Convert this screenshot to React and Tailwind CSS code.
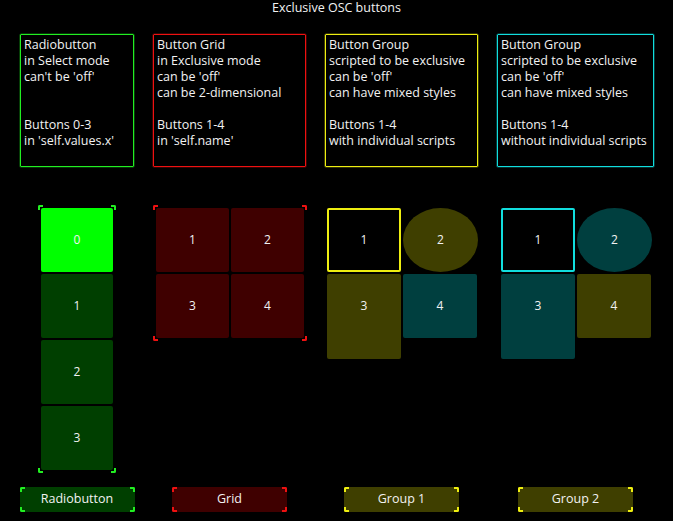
const font = { fontFamily: '"Open Sans", "DejaVu Sans", sans-serif' }

const infos = [
  {
    border: 'border-[#22ee22] shadow-[0_0_0_0.6px_#0d660d]',
    w: 'w-[114px]',
    lines: ['Radiobutton', 'in Select mode', "can't be 'off'", '', '', 'Buttons 0-3', "in 'self.values.x'"],
  },
  {
    border: 'border-[#ee1111] shadow-[0_0_0_0.6px_#660808]',
    w: 'w-[153px]',
    lines: ['Button Grid', 'in Exclusive mode', "can be 'off'", 'can be 2-dimensional', '', 'Buttons 1-4', "in 'self.name'"],
  },
  {
    border: 'border-[#eeee11] shadow-[0_0_0_0.6px_#666608]',
    w: 'w-[153px]',
    lines: ['Button Group', 'scripted to be exclusive', "can be 'off'", 'can have mixed styles', '', 'Buttons 1-4', 'with individual scripts'],
  },
  {
    border: 'border-[#11dddd] shadow-[0_0_0_0.6px_#086060]',
    w: 'w-[157px]',
    lines: ['Button Group', 'scripted to be exclusive', "can be 'off'", 'can have mixed styles', '', 'Buttons 1-4', 'without individual scripts'],
  },
]

function Brackets({ color }) {
  return (
    <>
      <span className={`absolute left-0 top-0 w-[5px] h-[5px] border-t-2 border-l-2 rounded-tl-[2px] ${color}`} />
      <span className={`absolute right-0 top-0 w-[5px] h-[5px] border-t-2 border-r-2 rounded-tr-[2px] ${color}`} />
      <span className={`absolute left-0 bottom-0 w-[5px] h-[5px] border-b-2 border-l-2 rounded-bl-[2px] ${color}`} />
      <span className={`absolute right-0 bottom-0 w-[5px] h-[5px] border-b-2 border-r-2 rounded-br-[2px] ${color}`} />
    </>
  )
}

function InfoBox({ info }) {
  return (
    <div className={`border ${info.border} h-[133px] pl-[3px] pt-[2px] rounded-[1px] text-[12.5px] leading-[16px]`}>
      {info.lines.map((l, i) => (
        <div key={i} className="h-[16px] whitespace-nowrap">{l}</div>
      ))}
    </div>
  )
}

function BottomButton({ label, bg, color }) {
  return (
    <div className={`relative w-[115px] h-[25px] self-center ${bg} rounded-[2px] flex items-center justify-center text-[12.5px]`}>
      <Brackets color={color} />
      {label}
    </div>
  )
}

function Radio() {
  return (
    <div className="relative w-[78px] h-[268px] self-center p-[3px] flex flex-col gap-[2px] text-[12px]">
      <Brackets color="border-[#22ee22]" />
      {[0, 1, 2, 3].map((n) => (
        <div
          key={n}
          className={`flex-1 rounded-[2px] flex items-center justify-center ${n === 0 ? 'bg-[#00ff00]' : 'bg-[#003f00]'}`}
        >
          {n}
        </div>
      ))}
    </div>
  )
}

function Grid() {
  return (
    <div className="relative w-[154px] h-[136px] p-[3px] grid grid-cols-2 gap-[2px] text-[12px]">
      <Brackets color="border-[#ee1111]" />
      {[1, 2, 3, 4].map((n) => (
        <div key={n} className="bg-[#3f0000] rounded-[2px] flex items-center justify-center">{n}</div>
      ))}
    </div>
  )
}

function Group({ edge, c2, c3, c4, offset }) {
  return (
    <div className={`grid grid-cols-[74px_75px] gap-[2px] items-start text-[12px] ${offset}`}>
      <div className={`h-[64px] border-2 ${edge} rounded-[2px] flex items-center justify-center`}>1</div>
      <div className={`h-[64px] ${c2} rounded-[50%] flex items-center justify-center`}>2</div>
      <div className={`h-[85px] ${c3} rounded-[2px] flex items-center justify-center pb-[21px]`}>3</div>
      <div className={`h-[64px] w-[74px] ${c4} rounded-[2px] flex items-center justify-center`}>4</div>
    </div>
  )
}

export default function App() {
  return (
    <div style={font} className="w-[673px] h-[521px] bg-black text-[#f2f2f2] flex flex-col overflow-hidden">
      <div className="h-[16px] leading-[16px] text-[12.5px] text-center">Exclusive OSC buttons</div>
      <div className="flex-1 flex pl-[20px] gap-[19px] mt-[18px] pb-[9px]">
        <div className={`${infos[0].w} flex flex-col`}>
          <InfoBox info={infos[0]} />
          <div className="mt-[38px] flex flex-col">
            <Radio />
          </div>
          <div className="mt-auto flex flex-col">
            <BottomButton label="Radiobutton" bg="bg-[#003f00]" color="border-[#22ee22]" />
          </div>
        </div>
        <div className={`${infos[1].w} flex flex-col`}>
          <InfoBox info={infos[1]} />
          <div className="mt-[38px]">
            <Grid />
          </div>
          <div className="mt-auto flex flex-col">
            <BottomButton label="Grid" bg="bg-[#3f0000]" color="border-[#ee1111]" />
          </div>
        </div>
        <div className={`${infos[2].w} flex flex-col`}>
          <InfoBox info={infos[2]} />
          <div className="mt-[41px]">
            <Group edge="border-[#eeee11]" c2="bg-[#3f3f00]" c3="bg-[#3f3f00]" c4="bg-[#003f3f]" offset="ml-[2px]" />
          </div>
          <div className="mt-auto flex flex-col">
            <BottomButton label="Group 1" bg="bg-[#3f3f00]" color="border-[#eeee11]" />
          </div>
        </div>
        <div className={`${infos[3].w} flex flex-col`}>
          <InfoBox info={infos[3]} />
          <div className="mt-[41px]">
            <Group edge="border-[#11dddd]" c2="bg-[#003f3f]" c3="bg-[#003f3f]" c4="bg-[#3f3f00]" offset="ml-[4px]" />
          </div>
          <div className="mt-auto flex flex-col">
            <BottomButton label="Group 2" bg="bg-[#3f3f00]" color="border-[#eeee11]" />
          </div>
        </div>
      </div>
    </div>
  )
}
